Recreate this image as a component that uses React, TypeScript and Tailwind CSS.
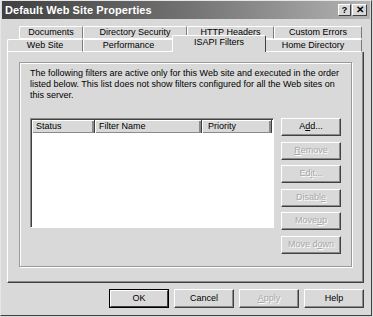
import React from 'react';

const font = { fontFamily: '"Liberation Sans", Arial, sans-serif' };

const TabBtn = ({ label, w, selected = false }: { label: string; w: string; selected?: boolean }) => (
  <div
    className={`${w} ${
      selected
        ? 'h-[17px] -mt-[4px] -mx-[2px] relative z-10 border-t border-l border-white border-r border-r-[#404040] pb-[3px]'
        : 'h-[13px] border-t border-l border-white border-r border-r-[#7a7a7a] border-b border-b-white'
    } bg-[#d9d9d9] rounded-t-[2px] flex items-center justify-center text-[9px] text-black`}
  >
    {label}
  </div>
);

const SideBtn = ({ children, disabled = false }: { children: React.ReactNode; disabled?: boolean }) => (
  <div
    className={`w-[60px] h-[18px] flex items-center justify-center text-[9px] border border-t-white border-l-white border-r-[#404040] border-b-[#404040] shadow-[inset_-1px_-1px_0_#8a8a8a] ${
      disabled ? 'text-[#a8a8a8] [text-shadow:1px_1px_0_#ffffff]' : 'text-black'
    }`}
  >
    {children}
  </div>
);

const u = (s: string) => <span className="underline">{s}</span>;

export default function App() {
  return (
    <div style={font} className="w-[373px] h-[317px] bg-[#d9d9d9] overflow-hidden">
      <div className="w-[372px] h-[316px] border border-t-[#e6e6e6] border-l-[#e6e6e6] border-r-[#404040] border-b-[#404040] flex flex-col">
        {/* Title bar */}
        <div className="h-[18px] mx-[1px] bg-gradient-to-r from-[#404040] via-[#727272] to-[#b4b4b4] flex items-center justify-between pl-[3px] pr-[3px]">
          <span className="text-white font-bold text-[11px] tracking-[0.1px]">Default Web Site Properties</span>
          <div className="flex gap-[1px]">
            <div className="w-[13px] h-[12px] bg-[#d9d9d9] border border-t-white border-l-white border-r-[#404040] border-b-[#404040] flex items-center justify-center text-[9px] font-bold leading-none">?</div>
            <div className="w-[15px] h-[12px] bg-[#d9d9d9] border border-t-white border-l-white border-r-[#404040] border-b-[#404040] flex items-center justify-center text-[10px] font-bold leading-none">✕</div>
          </div>
        </div>

        {/* Tabs */}
        <div className="mt-[7px] flex ml-[18px]">
          <TabBtn label="Documents" w="w-[64px]" />
          <TabBtn label="Directory Security" w="w-[104px]" />
          <TabBtn label="HTTP Headers" w="w-[87px]" />
          <TabBtn label="Custom Errors" w="w-[88px]" />
        </div>
        <div className="flex ml-[6px] items-end">
          <TabBtn label="Web Site" w="w-[76px]" />
          <TabBtn label="Performance" w="w-[91px]" />
          <TabBtn label="ISAPI Filters" w="w-[94px]" selected />
          <TabBtn label="Home Directory" w="w-[98px]" />
        </div>

        {/* Page */}
        <div className="ml-[6px] w-[357px] h-[231px] border-l border-white border-r border-r-[#404040] border-b border-b-[#404040] shadow-[inset_-1px_-1px_0_#8a8a8a] pt-[10px] pl-[11px]">
          <div className="w-[333px] h-[205px] border border-[#9a9a9a] shadow-[inset_1px_1px_0_#ffffff,1px_1px_0_#ffffff] pt-[5px] pl-[10px]">
            <p className="text-[9px] leading-[11px] text-black w-[318px]">
              The following filters are active only for this Web site and executed in the order listed below. This list does not show filters configured for all the Web sites on this server.
            </p>
            <div className="flex mt-[17px]">
              <div className="w-[244px] h-[110px] border border-t-[#8a8a8a] border-l-[#8a8a8a] border-r-white border-b-white bg-white shadow-[inset_1px_1px_0_#404040]">
                <div className="flex h-[13px] ml-[1px] mt-[1px] text-[9px] text-black">
                  <div className="w-[63px] pl-[4px] flex items-center bg-[#d9d9d9] border-r border-r-[#404040] shadow-[inset_1px_1px_0_#ffffff,inset_-2px_-1px_0_#8a8a8a]">Status</div>
                  <div className="w-[107px] pl-[4px] flex items-center bg-[#d9d9d9] border-r border-r-[#404040] shadow-[inset_1px_1px_0_#ffffff,inset_-2px_-1px_0_#8a8a8a]">Filter Name</div>
                  <div className="w-[70px] pl-[6px] flex items-center bg-[#d9d9d9] border-r border-r-[#404040] shadow-[inset_1px_1px_0_#ffffff,inset_-2px_-1px_0_#8a8a8a]">Priority</div>
                  <div className="flex-1 bg-[#d9d9d9] shadow-[inset_1px_1px_0_#ffffff,inset_0_-1px_0_#8a8a8a]"></div>
                </div>
              </div>
              <div className="ml-[7px] flex flex-col gap-[5.5px]">
                <SideBtn>A{u('d')}d...</SideBtn>
                <SideBtn disabled>{u('R')}emove</SideBtn>
                <SideBtn disabled>Ed{u('i')}t...</SideBtn>
                <SideBtn disabled>Disabl{u('e')}</SideBtn>
                <SideBtn disabled>Move {u('u')}p</SideBtn>
                <SideBtn disabled>Move d{u('o')}wn</SideBtn>
              </div>
            </div>
          </div>
        </div>

        {/* Bottom buttons */}
        <div className="flex justify-end gap-[5px] mt-[6px] mr-[7px]">
          <div className="w-[60px] h-[19px] border border-black flex">
            <div className="flex-1 flex items-center justify-center text-[9px] border border-t-white border-l-white border-r-[#404040] border-b-[#404040]">OK</div>
          </div>
          <div className="w-[60px] h-[19px] flex items-center justify-center text-[9px] border border-t-white border-l-white border-r-[#404040] border-b-[#404040] shadow-[inset_-1px_-1px_0_#8a8a8a]">Cancel</div>
          <div className="w-[60px] h-[19px] flex items-center justify-center text-[9px] text-[#a8a8a8] [text-shadow:1px_1px_0_#ffffff] border border-t-white border-l-white border-r-[#404040] border-b-[#404040] shadow-[inset_-1px_-1px_0_#8a8a8a]">{u('A')}pply</div>
          <div className="w-[60px] h-[19px] flex items-center justify-center text-[9px] border border-t-white border-l-white border-r-[#404040] border-b-[#404040] shadow-[inset_-1px_-1px_0_#8a8a8a]">Help</div>
        </div>
      </div>
    </div>
  );
}
